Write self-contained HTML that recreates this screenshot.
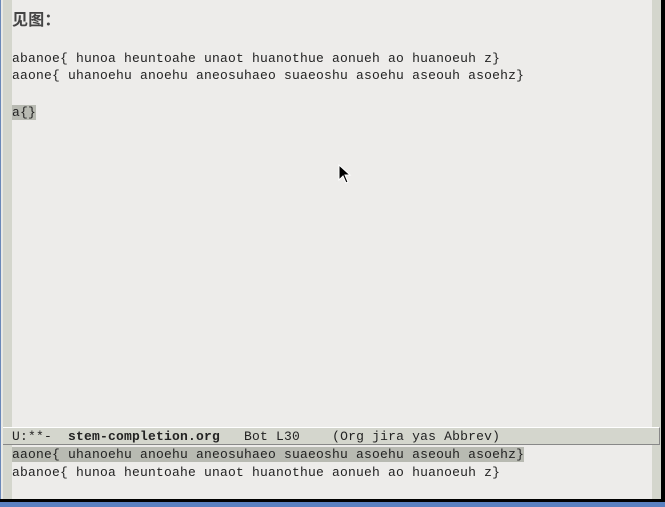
<!DOCTYPE html>
<html><head><meta charset="utf-8"><style>
html,body{margin:0;padding:0;width:665px;height:507px;overflow:hidden;background:#000;}
#win{position:absolute;left:0;top:0;width:661px;height:499px;background:#edecea;}
.lf{position:absolute;left:0;top:0;width:1px;height:499px;background:#6a88b8;}
.lf2{position:absolute;left:1px;top:0;width:2px;height:499px;background:#e8e8e4;}
.fr{position:absolute;left:3px;top:0;width:9px;height:499px;background:#d4d6cd;}
.rf{position:absolute;left:652px;top:0;width:9px;height:499px;background:#d4d6cd;}
.t{position:absolute;left:12px;font-family:"Liberation Mono","DejaVu Sans Mono",monospace;font-size:13px;letter-spacing:0.2px;color:#222;white-space:pre;line-height:17px;}
.ml{position:absolute;left:3px;top:427px;width:656px;height:16px;background:#d4d6cd;border-top:1px solid #fff;border-bottom:1px solid #888;border-right:1px solid #888;}
.hl{background:#b8bab2;}
#bot{position:absolute;left:0;top:502px;width:665px;height:5px;background:#5a80c0;}
</style></head><body>
<div id="win">
<div class="lf"></div><div class="lf2"></div><div class="fr"></div><div class="rf"></div>
<div class="t" style="top:11px;font-family:'Liberation Sans','Noto Sans CJK SC',sans-serif;font-size:16px;font-weight:bold;color:#444;line-height:20px">见图：</div>
<div class="t" style="top:50px">abanoe{ hunoa heuntoahe unaot huanothue aonueh ao huanoeuh z}</div>
<div class="t" style="top:67px">aaone{ uhanoehu anoehu aneosuhaeo suaeoshu asoehu aseouh asoehz}</div>
<div class="t" style="top:104px"><span class="hl">a{}</span></div>
<div class="ml"></div>
<div class="t" style="top:428px">U:**-  <b>stem-completion.org</b>   Bot L30    (Org jira yas Abbrev)</div>
<div class="t" style="top:446px"><span class="hl">aaone{ uhanoehu anoehu aneosuhaeo suaeoshu asoehu aseouh asoehz}</span></div>
<div class="t" style="top:464px">abanoe{ hunoa heuntoahe unaot huanothue aonueh ao huanoeuh z}</div>
<svg style="position:absolute;left:338px;top:164px" width="16" height="22"><path d="M1 1 L1 16 L5 12 L8 19 L10 18 L7 11 L12 11 Z" fill="#000" stroke="#fff" stroke-width="1"/></svg>
</div>
<div id="bot"></div>
</body></html>
